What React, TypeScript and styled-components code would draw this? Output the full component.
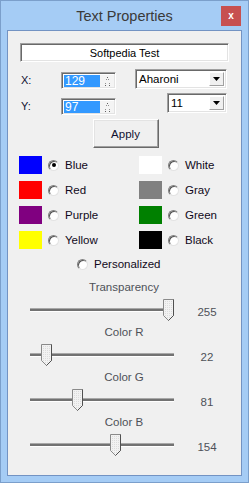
import React from "react";
import styled, {createGlobalStyle} from "styled-components";

const GlobalStyle = createGlobalStyle`
  html, body {
    margin: 0;
    padding: 0;
    background: #a5ccf5;
  }
  * {
    box-sizing: border-box;
  }
`;

const Window = styled.div`
  width: 249px;
  height: 483px;
  display: flex;
  flex-direction: column;
  background: #a5ccf5;
  border: 1px solid #7b9fcb;
  font-family: "Liberation Sans", Arial, sans-serif;
  font-size: 11px;
  color: #000;
`;

const TitleBar = styled.div`
  height: 29px;
  display: grid;
  grid-template-columns: 1fr auto 1fr;
  align-items: center;
`;

const Title = styled.div`
  grid-column: 2;
  font-size: 14.5px;
  color: #3a3a3a;
  margin-top: 1px;
`;

const CloseBtn = styled.div`
  grid-column: 3;
  justify-self: end;
  width: 20px;
  height: 20px;
  margin-right: 7px;
  margin-top: 1px;
  background: #c75050;
  color: #fff;
  font-size: 10px;
  font-weight: 700;
  display: flex;
  align-items: center;
  justify-content: center;
  line-height: 1;
`;

const Client = styled.div`
  flex: 1;
  margin: 0 6px 6px;
  border: 1px solid #7393c3;
  background: #f0f0f0;
  display: flex;
  flex-direction: column;
`;

const sunken = `
  border-style: solid;
  border-width: 1px;
  border-color: #a0a0a0 #ffffff #ffffff #a0a0a0;
  box-shadow: inset 1px 1px #696969, inset -1px -1px #e3e3e3;
  background: #fff;
`;

const NameBox = styled.div`
  ${sunken};
  margin: 12px 12px 0 12px;
  height: 19px;
  display: flex;
  align-items: center;
  justify-content: center;
`;

const CoordRow = styled.div<{ $top: number }>`
  display: flex;
  align-items: flex-start;
  margin-top: ${p => p.$top}px;
  padding: 0 14px 0 13px;
`;

const AxisLabel = styled.div<{ $top: number }>`
  width: 40px;
  line-height: 17px;
  margin-top: ${p => p.$top}px;
  color: #101030;
`;

const Spinner = styled.div<{ $top: number }>`
  ${sunken};
  width: 55px;
  height: 17px;
  margin-top: ${p => p.$top}px;
  display: flex;
  padding: 2px 1px 1px 2px;
`;

const SpinValue = styled.div`
  width: 36px;
  background: #3399ff;
  color: #fff;
  font-size: 12px;
  line-height: 13px;
  padding-left: 1px;
`;

const SpinButtons = styled.div`
  flex: 1;
  display: flex;
  flex-direction: column;
  align-items: center;
  justify-content: space-between;
  padding: 2px 0 1px;
  background: #f4f4f4;
`;

const Combo = styled.div<{ $width: number }>`
  ${sunken};
  margin-left: auto;
  width: ${p => p.$width}px;
  height: 20px;
  display: flex;
  align-items: center;
  padding: 0 2px 0 3px;
`;

const ComboText = styled.div`
  flex: 1;
  font-size: 11.5px;
  line-height: 14px;
`;

const ComboButton = styled.div`
  width: 15px;
  height: 14px;
  display: flex;
  align-items: center;
  justify-content: center;
  background: #f0f0f0;
  border: 1px solid;
  border-color: #fff #a0a0a0 #a0a0a0 #fff;
`;

const ApplyRow = styled.div`
  display: flex;
  justify-content: center;
  margin-top: 4px;
  padding-left: 2px;
`;

const Button = styled.div`
  width: 66px;
  height: 29px;
  display: flex;
  align-items: center;
  justify-content: center;
  background: #f0f0f0;
  border: 1px solid;
  border-color: #ffffff #696969 #696969 #ffffff;
  box-shadow: inset -1px -1px #a0a0a0, inset 1px 1px #e3e3e3;
  font-size: 11.5px;
  color: #101030;
`;

const ColorGrid = styled.div`
  display: grid;
  grid-template-columns: 120px 100px;
  row-gap: 7px;
  margin-top: 8px;
  padding-left: 11px;
`;

const ColorItem = styled.div`
  display: flex;
  align-items: center;
  height: 18px;
`;

const Swatch = styled.div<{ $color: string }>`
  width: 23px;
  height: 18px;
  background: ${p => p.$color};
`;

const Radio = styled.div<{ $checked?: boolean }>`
  width: 11px;
  height: 11px;
  border-radius: 50%;
  margin: 0 6px;
  background: #fff;
  border: 1px solid;
  border-color: #808080 #e3e3e3 #e3e3e3 #808080;
  box-shadow: inset 1px 1px #555;
  display: flex;
  align-items: center;
  justify-content: center;
  &::after {
    content: "";
    width: 4px;
    height: 4px;
    border-radius: 50%;
    background: ${p => (p.$checked ? "#000" : "transparent")};
  }
`;

const RadioLabel = styled.span`
  font-size: 11.5px;
  color: #100a20;
`;

const PersonalRow = styled.div`
  display: flex;
  align-items: center;
  height: 14px;
  margin-top: 8px;
  padding-left: 63px;
`;

const SliderBlock = styled.div`
  display: flex;
  flex-direction: column;
  margin-top: 9px;
  & + & {
    margin-top: 4px;
  }
`;

const SliderLabel = styled.div`
  text-align: center;
  line-height: 14px;
  font-size: 11.5px;
  color: #4e5058;
  padding-right: 1px;
`;

const SliderRow = styled.div`
  display: flex;
  align-items: center;
  height: 22px;
  margin-top: 5px;
  padding-left: 22px;
`;

const SliderTrackWrap = styled.div`
  position: relative;
  width: 144px;
  height: 22px;
`;

const Track = styled.div`
  margin-top: 9px;
  height: 4px;
  background: #727272;
  border-top: 1px solid #a8a8a8;
  border-bottom: 1px solid #ffffff;
`;

const Thumb = styled.svg`
  position: absolute;
  top: 0;
`;

const SliderValue = styled.div`
  width: 40px;
  margin-left: 13px;
  margin-top: 4px;
  text-align: center;
  font-size: 11.5px;
  color: #4e5058;
`;

const colors = [
    {name: "Blue", color: "#0000ff", checked: true},
    {name: "White", color: "#ffffff"},
    {name: "Red", color: "#ff0000"},
    {name: "Gray", color: "#808080"},
    {name: "Purple", color: "#800080"},
    {name: "Green", color: "#008000"},
    {name: "Yellow", color: "#ffff00"},
    {name: "Black", color: "#000000"},
];

const sliders = [
    {label: "Transparency", value: 255},
    {label: "Color R", value: 22},
    {label: "Color G", value: 81},
    {label: "Color B", value: 154},
];

const SpinArrows = () => (
    <SpinButtons>
        <svg width="5" height="3" viewBox="0 0 5 3">
            <rect x="2" y="0" width="1" height="1" fill="#606060"/>
            <rect x="1" y="2" width="1" height="1" fill="#909090"/>
            <rect x="3" y="2" width="1" height="1" fill="#909090"/>
        </svg>
        <svg width="5" height="3" viewBox="0 0 5 3">
            <rect x="0" y="0" width="1" height="1" fill="#909090"/>
            <rect x="4" y="0" width="1" height="1" fill="#909090"/>
            <rect x="0" y="2" width="1" height="1" fill="#606060"/>
            <rect x="4" y="2" width="1" height="1" fill="#606060"/>
        </svg>
    </SpinButtons>
);

const DownArrow = () => (
    <svg width="7" height="4" viewBox="0 0 7 4">
        <polygon points="0,0 7,0 3.5,4" fill="#000"/>
    </svg>
);

const App = () => {
    return (
        <>
            <GlobalStyle/>
            <Window>
                <TitleBar>
                    <Title>Text Properties</Title>
                    <CloseBtn>x</CloseBtn>
                </TitleBar>
                <Client>
                    <NameBox>Softpedia Test</NameBox>
                    <CoordRow $top={7}>
                        <AxisLabel $top={3}>X:</AxisLabel>
                        <Spinner $top={3}>
                            <SpinValue>129</SpinValue>
                            <SpinArrows/>
                        </Spinner>
                        <Combo $width={92}>
                            <ComboText>Aharoni</ComboText>
                            <ComboButton><DownArrow/></ComboButton>
                        </Combo>
                    </CoordRow>
                    <CoordRow $top={4}>
                        <AxisLabel $top={5}>Y:</AxisLabel>
                        <Spinner $top={5}>
                            <SpinValue>97</SpinValue>
                            <SpinArrows/>
                        </Spinner>
                        <Combo $width={60}>
                            <ComboText>11</ComboText>
                            <ComboButton><DownArrow/></ComboButton>
                        </Combo>
                    </CoordRow>
                    <ApplyRow>
                        <Button>Apply</Button>
                    </ApplyRow>
                    <ColorGrid>
                        {colors.map(c => (
                            <ColorItem key={c.name}>
                                <Swatch $color={c.color}/>
                                <Radio $checked={c.checked}/>
                                <RadioLabel>{c.name}</RadioLabel>
                            </ColorItem>
                        ))}
                    </ColorGrid>
                    <PersonalRow>
                        <Radio/>
                        <RadioLabel>Personalized</RadioLabel>
                    </PersonalRow>
                    {sliders.map(s => (
                        <SliderBlock key={s.label}>
                            <SliderLabel>{s.label}</SliderLabel>
                            <SliderRow>
                                <SliderTrackWrap>
                                    <Track/>
                                    <Thumb width="11" height="22" viewBox="0 0 11 22"
                                           style={{left: Math.round(s.value / 255 * 133)}}>
                                        <defs>
                                            <pattern id="dots" width="2" height="2" patternUnits="userSpaceOnUse">
                                                <rect width="2" height="2" fill="#f2f2f2"/>
                                                <rect width="1" height="1" fill="#dcdcdc"/>
                                            </pattern>
                                        </defs>
                                        <polygon points="0.5,0.5 10.5,0.5 10.5,16.5 5.5,21.5 0.5,16.5"
                                                 fill="url(#dots)" stroke="#8a8a8a"/>
                                        <polyline points="10.5,0.5 10.5,16.5 5.5,21.5" fill="none" stroke="#505050"/>
                                    </Thumb>
                                </SliderTrackWrap>
                                <SliderValue>{s.value}</SliderValue>
                            </SliderRow>
                        </SliderBlock>
                    ))}
                </Client>
            </Window>
        </>
    );
};

export default App;
